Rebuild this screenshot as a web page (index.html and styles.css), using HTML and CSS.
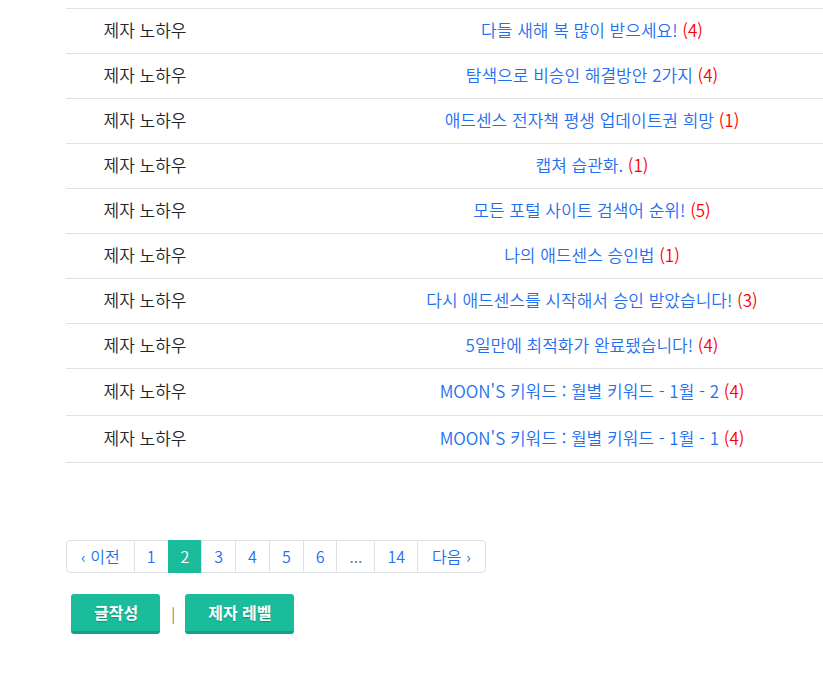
FILE: index.html
```html
<!DOCTYPE html>
<html lang="ko">
<head>
    <meta charset="UTF-8">
    <meta name="viewport" content="width=device-width, initial-scale=1.0">
    <title>제자 노하우</title>
    <link rel="stylesheet" href="styles.css">
</head>
<body>
    <div class="board">
        <table class="post-table">
            <colgroup>
                <col class="col-cat">
                <col class="col-title">
            </colgroup>
            <tbody>
                <tr>
                    <td>제자 노하우</td>
                    <td><a href="#">다들 새해 복 많이 받으세요!</a> <span class="count">(4)</span></td>
                </tr>
                <tr>
                    <td>제자 노하우</td>
                    <td><a href="#">탐색으로 비승인 해결방안 2가지</a> <span class="count">(4)</span></td>
                </tr>
                <tr>
                    <td>제자 노하우</td>
                    <td><a href="#">애드센스 전자책 평생 업데이트권 희망</a> <span class="count">(1)</span></td>
                </tr>
                <tr>
                    <td>제자 노하우</td>
                    <td><a href="#">캡쳐 습관화.</a> <span class="count">(1)</span></td>
                </tr>
                <tr>
                    <td>제자 노하우</td>
                    <td><a href="#">모든 포털 사이트 검색어 순위!</a> <span class="count">(5)</span></td>
                </tr>
                <tr>
                    <td>제자 노하우</td>
                    <td><a href="#">나의 애드센스 승인법</a> <span class="count">(1)</span></td>
                </tr>
                <tr>
                    <td>제자 노하우</td>
                    <td><a href="#">다시 애드센스를 시작해서 승인 받았습니다!</a> <span class="count">(3)</span></td>
                </tr>
                <tr>
                    <td>제자 노하우</td>
                    <td><a href="#">5일만에 최적화가 완료됐습니다!</a> <span class="count">(4)</span></td>
                </tr>
                <tr class="tall">
                    <td>제자 노하우</td>
                    <td><a href="#">MOON'S 키워드 : 월별 키워드 - 1월 - 2</a> <span class="count">(4)</span></td>
                </tr>
                <tr class="tall">
                    <td>제자 노하우</td>
                    <td><a href="#">MOON'S 키워드 : 월별 키워드 - 1월 - 1</a> <span class="count">(4)</span></td>
                </tr>
            </tbody>
        </table>

        <ul class="pagination">
            <li><a href="#">&lsaquo; 이전</a></li>
            <li><a href="#">1</a></li>
            <li class="active"><a href="#">2</a></li>
            <li><a href="#">3</a></li>
            <li><a href="#">4</a></li>
            <li><a href="#">5</a></li>
            <li><a href="#">6</a></li>
            <li class="disabled"><span>...</span></li>
            <li><a href="#">14</a></li>
            <li><a href="#">다음 &rsaquo;</a></li>
        </ul>

        <div class="actions">
            <a class="btn" href="#">글작성</a>
            <span class="sep">|</span>
            <a class="btn" href="#">제자 레벨</a>
        </div>
    </div>
</body>
</html>
```

FILE: styles.css
```css
html, body {
    overflow-x: hidden;
}
body {
    margin: 8px 0 0 66px;
    font-family: "Noto Sans CJK KR", "Noto Sans", sans-serif;
    font-size: 17px;
    font-weight: 350;
    color: #212529;
    background: #fff;
}
a {
    color: #1f6ff0;
    text-decoration: none;
}
.post-table {
    width: 894px;
    table-layout: fixed;
    border-collapse: collapse;
    border-bottom: 1px solid #dee2e6;
}
.col-cat {
    width: 158px;
}
.post-table td {
    border-top: 1px solid #dee2e6;
    padding: 11px 0 13px;
    line-height: 20px;
    text-align: center;
    white-space: nowrap;
}
.post-table tr.tall td {
    padding: 12px 0 14px;
}
.count {
    color: #ff0000;
}
.pagination {
    display: flex;
    list-style: none;
    margin: 77px 0 0;
    padding: 0;
    font-size: 16px;
}
.pagination li a,
.pagination li span {
    display: block;
    height: 31px;
    line-height: 31px;
    padding: 0 12px;
    border: 1px solid #dee2e6;
    margin-left: -1px;
}
.pagination li:first-child a {
    margin-left: 0;
    padding: 0 14px;
    border-radius: 4px 0 0 4px;
}
.pagination li:last-child a {
    padding: 0 14px;
    border-radius: 0 4px 4px 0;
}
.pagination li.active a {
    background: #1abc9c;
    border-color: #1abc9c;
    color: #fff;
}
.pagination li.disabled span {
    color: #6c757d;
    padding: 0 12px;
}
.actions {
    display: flex;
    align-items: center;
    gap: 10px;
    margin: 21px 0 0 5px;
}
.btn {
    display: block;
    height: 37px;
    line-height: 37px;
    padding: 0 22px 0 23px;
    background: #1abc9c;
    border-bottom: 3px solid #16a085;
    border-radius: 3px;
    color: #fff;
    font-size: 16px;
    font-weight: bold;
    text-shadow: 0 1px 1px rgba(0, 0, 0, 0.25);
}
.sep {
    margin-left: 1px;
    color: #8a6d55;
    font-size: 15px;
    line-height: 20px;
}
```
